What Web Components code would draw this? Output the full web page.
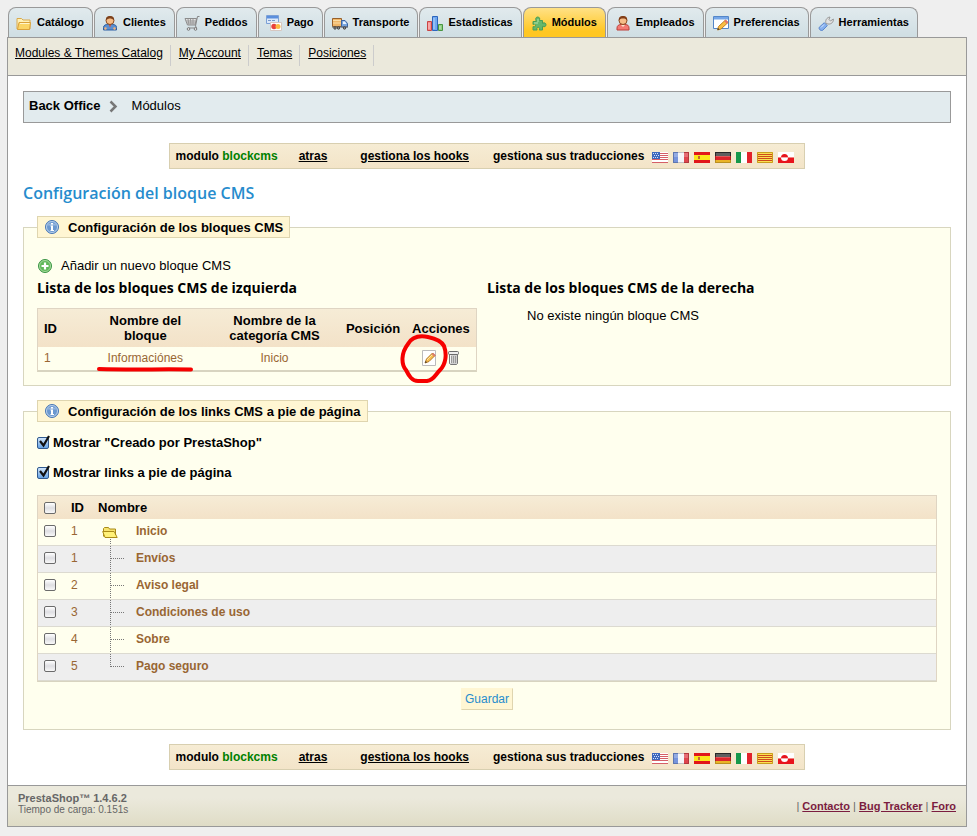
<!DOCTYPE html>
<html lang="es">
<head>
<meta charset="utf-8">
<title>Módulos - Back Office</title>
<style>
body{margin:0;background:#efefef;color:#000;font-family:"Liberation Sans",Arial,sans-serif;font-size:12px}
</style>
</head>
<body>
<back-office></back-office>
<script>
const define=(name,html)=>customElements.define(name,class extends HTMLElement{
  constructor(){super();this.attachShadow({mode:'open'})}
  connectedCallback(){this.shadowRoot.innerHTML=typeof html==='function'?html(this):html}
});

const stripesV=(a,b,c)=>`<path fill="${a}" d="M0 0h5v11H0z"/><path fill="${b}" d="M5 0h6v11H5z"/><path fill="${c}" d="M11 0h5v11h-5z"/>`;
const gloss='<path fill="#fff" opacity=".22" d="M1 1h14v4H1z"/><path fill="none" stroke="#000" stroke-opacity=".2" d="M.5.5h15v10H.5z"/>';
const puzzlePath='M2 6.5h3.3C4 3.500 5 2 6.700 2s2.700 1.500 1.600 3.500h3.200V8.300c2-1 3.500-.2 3.500 1.500s-1.500 2.500-3.500 1.500V15H8.300c.8-1.700.3-2.700-1-2.700s-1.900 1-1.200 2.700H2v-3.400c1.600.6 2.500.1 2.500-1.200S3.600 8.700 2 9.500z';
const icons={
  catalog:'<path d="M1 14V3.500h4.500L7 5h7v9z" fill="#fff1b8" stroke="#d9a94a"/><path d="M1.500 14.500 3 7.500h11.500l-1 7z" fill="#fbd566" stroke="#dba23a"/><path d="M4 8.500h9.500" stroke="#fff5cc"/>',
  client:'<path d="M1.500 15v-2.500C1.500 10 4 9.500 5.500 9.500h5c2.500 0 4 .8 4 3V15z" fill="#5b8fd0" stroke="#2d5fa3"/><path d="M2.500 14l2-1M13.500 14l-2-1" stroke="#f3b27a" stroke-width="2"/><circle cx="8" cy="5.500" r="4" fill="#f6bd88" stroke="#8b4a1f"/><path d="M4 5.500C3.500 2 6 1 8 1s4.500 1 4 4.500C11 4 9 3.500 8 3.500S5 4 4 5.500z" fill="#7d421d"/><path d="m7 10 1 2.500L9 10z" fill="#e04a2c"/>',
  employee:'<path d="M2 15v-2c0-2.500 2-3.500 4-3.500h4c2.500 0 4 1 4 3.500v2z" fill="#f47a73" stroke="#bd3e39"/><circle cx="8" cy="5.500" r="4" fill="#f6bd88" stroke="#8b4a1f"/><path d="M4 6C3 2 6 1 8 1s5 1 4 5c-.5-2-2-2.500-4-2.500S4.500 4 4 6z" fill="#823f19"/><path d="m6 10 2 2 2-2z" fill="#fce0c8"/>',
  cart:'<path d="M1 3.500h11.500L11 10H3.500z" fill="#e2e2e2" stroke="#8c8c8c"/><path d="M15.500 1.500h-2L11.500 11l1 2H4" fill="none" stroke="#858585"/><path d="M4 4l1 6M6.500 4l.5 6M9 4v6M2 6h9.500M3 8h8.500" fill="none" stroke="#999"/><circle cx="4.500" cy="14" r="1.300" fill="#eee" stroke="#777"/><circle cx="11.500" cy="14" r="1.300" fill="#eee" stroke="#777"/>',
  pay:'<path d="M.5.5h12v8H.5z" fill="#dce9f9" stroke="#7ba0d6"/><path d="M1 1h11v2.500H1z" fill="#5a8fdd"/><path d="M2 5.500h3M6 5.500h3" stroke="#7798c8"/><path d="M4.500 7.500h11v8h-11z" fill="#fff" stroke="#d6c7c0"/><circle cx="8" cy="11.500" r="2.700" fill="#e8413c"/><circle cx="12" cy="11.500" r="2.500" fill="#fbb942"/>',
  truck:'<path d="M.5 3.500h9v8h-9z" fill="#f0b668" stroke="#98602b"/><path d="M1 5.500h8M1 8h8" stroke="#fbdca6"/><path d="M9.500 5.500h3.500l2.500 3v3.500h-6z" fill="#78a5df" stroke="#3c66a4"/><path d="M11 6.500h2l1.500 2.500H11z" fill="#e8f3ff"/><path d="M0 12h16" stroke="#666"/><circle cx="3" cy="13" r="1.200" fill="#999" stroke="#444"/><circle cx="6.500" cy="13" r="1.200" fill="#999" stroke="#444"/><circle cx="12.500" cy="13" r="1.200" fill="#999" stroke="#444"/>',
  chart:'<path d="M.5 6.500h4v9h-4z" fill="#f48b8b" stroke="#c94444"/><path d="M5.500 1.500h5v14h-5z" fill="#6fa8f0" stroke="#2d65bd"/><path d="M11.500 9.500h4v6h-4z" fill="#8fcf84" stroke="#489541"/><path d="M2 8v6M7 3v11M13 11v3" stroke="#fff" stroke-opacity=".5"/>',
  puzzle:`<path d="${puzzlePath}" fill="#67b76b" stroke="#4a9d55"/><path d="M3 8h4M7 4v3" stroke="#b4e3ae" fill="none"/>`,
  prefs:'<path d="M.5 1.500h15v12H.5z" fill="#fff" stroke="#5486c8"/><path d="M1 2h14v2.500H1z" fill="#75a6e8"/><path d="m4.500 15 1-3.500 7-6.500 2.500 2.500L8 14z" fill="#f9be43" stroke="#c3811f"/><path d="m12 5.500 2.500 2.500" stroke="#e5706d" stroke-width="2"/><path d="m4.500 15 .5-2 1.500 1.500z" fill="#333"/>',
  tools:'<path d="M8 8.500c-1-3 .5-6 4-6.500l-1 2.500 1.500 1.500L15.300 4c.5 3-2 5.500-5.300 5z" fill="#e2e2e2" stroke="#999"/><path d="m1.300 12.200 5-4.500 3 3-4.500 4.500c-2 1-4.500-1-3.500-3z" fill="#86b0ee" stroke="#5a86cc"/><path d="m3 12.500 3-3" stroke="#d5e6ff"/>',
  info:'<circle cx="8" cy="8" r="6.500" fill="#6b98cf" stroke="#4a78b5"/><circle cx="8" cy="8" r="5.500" fill="none" stroke="#b8d0ec"/><path d="M3.500 6.500c1-3 8-3 9 0z" fill="#fff" opacity=".3"/><path d="M7 4h2v1.500H7zM6.500 6.500H9V11h1v1H6.500v-1H7V7.500h-.5z" fill="#fff"/>',
  add:'<circle cx="8" cy="8" r="6.500" fill="#60b85a" stroke="#3b9445"/><circle cx="8" cy="8" r="5.500" fill="none" stroke="#a5d99d"/><path d="M8 4.500v7M4.500 8h7" stroke="#fff" stroke-width="2.200"/>',
  edit:'<path d="M1.500.5h13v15h-13z" fill="#fff" stroke="#bbb"/><path d="m4 13 1.500-4L11.500 3 14 5.500 8 11.500z" fill="#f7bf50" stroke="#b77b25"/><path d="m6 10 6-6" stroke="#ffe6a5"/><path d="M11.500 3.500 14 6" stroke="#db7d6f" stroke-width="2"/><path d="m4 13 .7-2 1.300 1.300z" fill="#333"/>',
  trash:'<path d="M4.500 3.500h8v10l-1 1h-6l-1-1z" fill="#d0d0d0" stroke="#777"/><rect x="3.500" y="1.500" width="10" height="3" rx="1" fill="#eee" stroke="#6a6a6a"/><path d="M6.500 6v7M8.500 6v7M10.500 6v7" stroke="#9a9a9a"/><path d="M5.500 5v8" stroke="#f4f4f4"/>',
  folder:'<path d="M1.500 12.500v-8l1-1h4l1 1.500h6v2" fill="#f7e36d" stroke="#a98a18"/><path d="M3 13.500.7 7.500h11.500l3 6z" fill="#fff178" stroke="#a98a18"/><path d="M13.500 5v6" stroke="#a98a18"/>'
};
const flags={
  us:['English','<path fill="#fff" d="M0 0h16v11H0z"/><path stroke="#d55f67" d="M0 1.500h16M0 3.500h16M0 5.500h16M0 7.500h16M0 10.500h16"/><path fill="#3d68bd" d="M0 0h8v7H0z"/><path stroke="#d4e0fa" stroke-dasharray="1 1" d="M1 1.500h6M2 3.500h5M1 5.500h6"/>'],
  fr:['Français',stripesV('#7794dc','#f4f4f8','#de454d')+gloss],
  es:['Español','<path fill="#e1161a" d="M0 0h16v11H0z"/><path fill="#fbe51b" d="M0 3h16v5H0z"/><path fill="#c4682f" d="M4 4h2v3H4z"/>'],
  de:['Deutsch','<path fill="#333" d="M0 0h16v4H0z"/><path fill="#dc252b" d="M0 4h16v4H0z"/><path fill="#e9b427" d="M0 8h16v3H0z"/>'+gloss],
  it:['Italiano',stripesV('#16984b','#fff','#e2222a')],
  ca:['Català','<path fill="#fbe052" d="M0 0h16v11H0z"/><path stroke="#ce4a1c" d="M0 2.500h16M0 4.500h16M0 6.500h16M0 8.500h16"/><path fill="none" stroke="#c99c1d" d="M.5.5h15v10H.5z"/>'],
  gl:['Kalaallisut','<path fill="#fff" d="M0 0h16v5.500H0z"/><path fill="#e8141c" d="M0 5.500h16V11H0z"/><path fill="#e8141c" d="M3 5.500a3.500 3.500 0 0 1 7 0z"/><path fill="#fff" d="M3 5.500a3.500 3.500 0 0 0 7 0z"/>']
};

define('ui-icon',el=>`<style>:host{display:block;flex:none;width:16px;height:16px}svg{display:block}</style>
<svg width="16" height="16" viewBox="0 0 16 16" fill="none" aria-hidden="true">${icons[el.getAttribute('name')]}</svg>`);

define('flag-icon',el=>{const[n,g]=flags[el.getAttribute('code')];return`<style>:host{display:block}a,svg{display:block}</style>
<a href="#" aria-label="${n}"><svg width="16" height="11" viewBox="0 0 16 11">${g}</svg></a>`});

define('tab-item',el=>`<style>
:host{display:block}
a{display:flex;align-items:center;gap:5px;height:30px;box-sizing:border-box;padding:1px 8px 0 7px;border:1px solid #999;border-bottom:0;border-radius:8px 8px 0 0;background:linear-gradient(#e1eaed,#cfdee3);color:#000;font-size:11px;font-weight:700;line-height:16px;white-space:nowrap;text-decoration:none}
:host([active]) a{background:linear-gradient(#ffe186,#ffc723 80%)}
span{margin-bottom:2px}
</style><a href="#"><ui-icon name="${el.getAttribute('icon')}"></ui-icon><span><slot></slot></span></a>`);

define('main-tabs',`<style>nav{display:flex;gap:1px;padding:0 1px}:host{display:block}</style>
<nav>
<tab-item icon="catalog">Catálogo</tab-item><tab-item icon="client">Clientes</tab-item><tab-item icon="cart">Pedidos</tab-item><tab-item icon="pay">Pago</tab-item><tab-item icon="truck">Transporte</tab-item><tab-item icon="chart">Estadísticas</tab-item><tab-item icon="puzzle" active>Módulos</tab-item><tab-item icon="employee">Empleados</tab-item><tab-item icon="prefs">Preferencias</tab-item><tab-item icon="tools">Herramientas</tab-item>
</nav>`);

define('sub-menu',`<style>
:host{display:block;background:#ebe9dc;border-bottom:1px solid #999}
ul{display:flex;margin:0;padding:7px 0 9px 7px;list-style:none}
li{padding:0 7px 5px 0;margin-right:8px;border-right:1px solid #ccc;line-height:16px}
a{color:#000}
</style><ul><li><a href="#">Modules &amp; Themes Catalog</a></li><li><a href="#">My Account</a></li><li><a href="#">Temas</a></li><li><a href="#">Posiciones</a></li></ul>`);

define('bread-crumb',`<style>
:host{display:block}
nav{display:flex;align-items:center;height:30px;padding:0 5px;border:1px solid #999;background:#e2ebee;font-size:13px}
span,a{margin-bottom:4px;color:#000;text-decoration:none}a{font-weight:700}
svg{margin:0 14px 2px 8px}
</style><nav aria-label="Ruta"><a href="#">Back Office</a><svg width="9" height="13" viewBox="0 0 9 13" fill="none" aria-hidden="true"><path d="m1.500 1.500 5 5-5 5" stroke="#777" stroke-width="2.500"/></svg><span>Módulos</span></nav>`);

define('module-bar',`<style>
:host{display:flex;justify-content:center}
div{display:flex;align-items:center;height:24px;padding:0 10px 0 6px;border:1px solid #d8cfb0;background:linear-gradient(#f6ecd4,#f3e4c8);font-weight:700;white-space:nowrap}
b{color:green}
.group{display:flex;gap:5px;padding-top:3px;margin-left:8px}
a,.tr{color:#000}
.at{margin-left:21px}.hooks{margin-left:33px}.tr{margin-left:24px}
</style><div><span>modulo <b>blockcms</b></span><a class="at" href="#">atras</a><a class="hooks" href="#">gestiona los hooks</a><span class="tr">gestiona sus traducciones</span>
<span class="group">${Object.keys(flags).map(c=>`<flag-icon code="${c}"></flag-icon>`).join('')}</span></div>`);

define('panel-box',el=>`<style>
:host{display:block}
fieldset{margin:0;min-width:0;padding:0 13px;border:1px solid #d8d6bf;background:#ffffee}
legend{display:flex;align-items:center;gap:8px;height:20px;padding:0 6px;border:1px solid #dfd5af;background:#fff6d3;font-size:13px;font-weight:700;white-space:nowrap}
</style><fieldset><legend><ui-icon name="info"></ui-icon>${el.getAttribute('heading')}</legend><slot></slot></fieldset>`);

define('cms-blocks-table',`<style>
:host{display:block}
table{width:100%;border-spacing:0;table-layout:fixed;border:1px solid #dfd5c3;border-bottom:2px solid #d8d4c0;font-size:12px}
th{height:38px;padding:0 10px;background:linear-gradient(#f6ecd6,#f3e2c8);font-size:13px;line-height:15px}
th:first-child,td:first-child{text-align:left;padding:0 6px}
th:nth-child(n+4){padding:0}
td{height:21px;padding:0 0 2px;text-align:center;color:#996633}
td:first-child{padding-bottom:2px}
.mark{position:relative;display:inline-block}
.mark svg{position:absolute;pointer-events:none}
.line{left:-13px;top:13px}
.ring{left:-22px;top:-17px}
.acts{display:flex;justify-content:center;gap:8px}
.acts a,.acts ui-icon{display:block}
</style><table><colgroup><col style="width:10%"><col style="width:29%"><col style="width:30%"><col style="width:15%"><col style="width:16%"></colgroup>
<thead><tr><th>ID</th><th>Nombre del bloque</th><th>Nombre de la categoría CMS</th><th>Posición</th><th>Acciones</th></tr></thead>
<tbody><tr><td>1</td><td><span class="mark">Informaciónes<svg class="line" width="102" height="10" viewBox="0 0 102 10" aria-hidden="true"><path d="M4 5C35 6 65 5 96 5.500" fill="none" stroke="#f60000" stroke-width="4" stroke-linecap="round"/></svg></span></td><td>Inicio</td><td></td>
<td><span class="acts"><span class="mark"><a href="#" aria-label="Editar"><ui-icon name="edit"></ui-icon></a><svg class="ring" width="50" height="52" viewBox="0 0 50 52" aria-hidden="true"><path d="M29 4C19 2 13 4 9 11 2 20 2 31 7 37c3 6 6 11 12 11h9c7-1 8-6 13-11 6-6 7-16 4-24C42 7 34 5 29 4z" fill="none" stroke="#f60000" stroke-width="4" stroke-linejoin="round"/></svg></span><a href="#" aria-label="Eliminar"><ui-icon name="trash"></ui-icon></a></span></td></tr></tbody></table>`);

const checkStyle=`
input{appearance:none;flex:none;display:block;width:12px;height:12px;margin:0;border:1px solid #6b6b6b;border-radius:2px;background:linear-gradient(#fff,#dedee2 50%,#f8f8f8)}
`;
define('check-row',`<style>:host{display:block}
label{display:flex;align-items:center;gap:4px;font-size:13px;font-weight:700;line-height:16px}
${checkStyle}
.box{position:relative}
input:checked{border-color:#315a8f;background:linear-gradient(#cfe4fa,#67a4e5)}
svg{position:absolute;left:1px;top:-3px;pointer-events:none}
input:not(:checked)+svg{display:none}
</style><label><span class="box"><input type="checkbox" checked><svg width="13" height="14" viewBox="0 0 13 14" fill="none" aria-hidden="true"><path d="m2 7 3.500 4.500L11 2" stroke="#111" stroke-width="2.200"/></svg></span><slot></slot></label>`);

const pages=[['1','Inicio'],['1','Envíos'],['2','Aviso legal'],['3','Condiciones de uso'],['4','Sobre'],['5','Pago seguro']];
const branch=i=>i===0
 ?`<svg width="24" height="26" viewBox="0 0 24 26" fill="none" aria-hidden="true"><g transform="translate(0 5)">${icons.folder}</g><path d="M8.500 20v6" stroke="#777" stroke-dasharray="1 1"/></svg>`
 :`<svg width="24" height="26" viewBox="0 0 24 26" fill="none" aria-hidden="true"><path d="M8.500 0v${i===5?13:26}M9 12.500h13" stroke="#777" stroke-dasharray="1 1"/></svg>`;
define('pages-table',`<style>
:host{display:block}
${checkStyle}
table{width:100%;border-spacing:0;border:1px solid #dfd5c3;border-bottom:1px solid #d8d4c0;color:#996633}
th{height:23px;padding:0;background:linear-gradient(#f6ecd6,#f3e2c8);color:#000;font-size:13px;text-align:left}
td{height:24px;padding:0 0 2px;border-bottom:1px solid #dcdad0}
th:first-child,td:first-child{width:27px;padding-left:6px}
th:nth-child(2),td:nth-child(2){width:27px}
tbody tr:nth-child(even){background:#eee}
.n{display:flex;align-items:center;height:24px;padding-left:4px;font-weight:700}
.n svg{align-self:flex-start;margin-right:10px}
</style><table><thead><tr><th><input type="checkbox" aria-label="Seleccionar todo"></th><th>ID</th><th>Nombre</th></tr></thead><tbody>
${pages.map(([id,n],i)=>`<tr><td><input type="checkbox" aria-label="${n}"></td><td>${id}</td><td><span class="n">${branch(i)}<span>${n}</span></span></td></tr>`).join('')}
</tbody></table>`);

define('page-footer',`<style>
:host{display:block;border-top:1px solid #999;background:linear-gradient(#ebe9dc,#ebe9dc 30%,#dfdcc6)}
footer{display:flex;justify-content:space-between;align-items:center;height:40px;padding:0 10px;font-size:11px;color:#666}
p{margin:0;line-height:12px;padding-bottom:5px}
nav{padding-bottom:1px}
small{display:block;font-size:10px;line-height:11px}
a{color:#7b1c3f;font-weight:700}
</style><footer><p><b>PrestaShop™ 1.4.6.2</b><small>Tiempo de carga: 0.151s</small></p><nav>| <a href="#">Contacto</a> | <a href="#">Bug Tracker</a> | <a href="#">Foro</a></nav></footer>`);

define('back-office',`<style>
:host{display:block;padding:7px 10px 9px 7px}
.page{border:1px solid #999;background:#fff}
main{display:block;padding:15px}
h1,h2{font-family:"Trebuchet MS","Open Sans",sans-serif}
h1{margin:13px 0 12px;font-size:16px;font-weight:600;line-height:22px;color:#268ccd}
h2{margin:0;font-size:14px;font-weight:700;line-height:20px}
module-bar.top{margin-top:20px}
module-bar.end{margin-top:14px}
.add{display:flex;align-items:center;gap:8px;margin-top:19px;color:#000;font-size:13px;line-height:17px;text-decoration:none}
.cols{display:grid;grid-template-columns:1fr 1fr;padding:4px 0 13px}
.cols>div:first-child{max-width:440px}
cms-blocks-table{margin-top:10px}
.none{margin:9px 0 0 40px;font-size:13px;line-height:17px}
.second{margin-top:14px}
check-row{margin-top:13px}
check-row+check-row{margin-top:14px}
pages-table{margin-top:14px}
button{display:block;margin:6px auto 19px;height:22px;padding:0 3px;border:1px solid;border-color:#fff6d3 #dfd5af #dfd5af #fff6d3;background:#fff6d3;color:#268ccd;font:12px "Liberation Sans",Arial,sans-serif}
</style>
<main-tabs></main-tabs>
<div class="page">
<sub-menu></sub-menu>
<main>
<bread-crumb></bread-crumb>
<module-bar class="top"></module-bar>
<h1>Configuración del bloque CMS</h1>
<panel-box heading="Configuración de los bloques CMS">
<a class="add" href="#"><ui-icon name="add"></ui-icon>Añadir un nuevo bloque CMS</a>
<div class="cols"><div><h2>Lista de los bloques CMS de izquierda</h2><cms-blocks-table></cms-blocks-table></div>
<div><h2>Lista de los bloques CMS de la derecha</h2><p class="none">No existe ningún bloque CMS</p></div></div>
</panel-box>
<panel-box class="second" heading="Configuración de los links CMS a pie de página">
<check-row>Mostrar "Creado por PrestaShop"</check-row>
<check-row>Mostrar links a pie de página</check-row>
<pages-table></pages-table>
<button type="button">Guardar</button>
</panel-box>
<module-bar class="end"></module-bar>
</main>
<page-footer></page-footer>
</div>`);
</script>
</body>
</html>
